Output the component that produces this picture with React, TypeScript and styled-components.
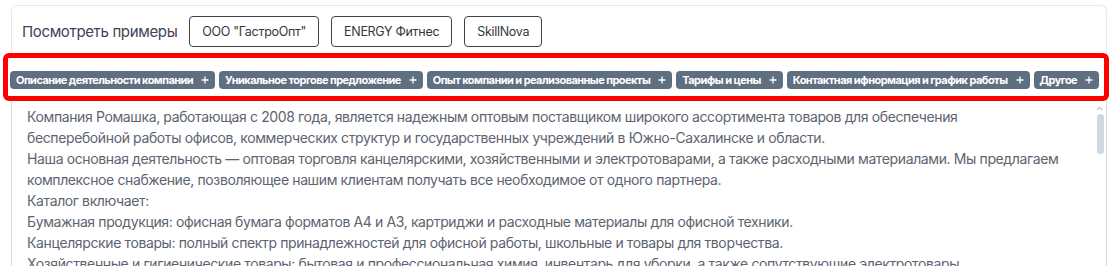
import React from "react";
import styled, { createGlobalStyle } from "styled-components";

const GlobalStyle = createGlobalStyle`
  html, body {
    margin: 0;
    padding: 0;
    background: #ffffff;
    overflow: hidden;
  }
  body {
    font-family: Inter, "Noto Sans", "Liberation Sans", sans-serif;
  }
`;

const Page = styled.div`
  padding: 5px 0 0 8px;
  width: 1105px;
  display: flex;
  flex-direction: column;
`;

const HeaderCard = styled.div`
  margin-left: 3px;
  width: 1096px;
  box-sizing: border-box;
  border: 1px solid #e7e8ea;
  border-bottom: none;
  border-radius: 6px 6px 0 0;
  padding: 10px 10px 11px 10px;
  display: flex;
  align-items: center;
  gap: 12px;
`;

const Label = styled.span`
  font-size: 15px;
  color: #3d4457;
  letter-spacing: -0.35px;
`;

const ExampleButton = styled.button`
  height: 31px;
  box-sizing: border-box;
  padding: 0 12px;
  border: 1px solid #3f4246;
  border-radius: 4px;
  background: #ffffff;
  font-family: Inter, "Noto Sans", "Liberation Sans", sans-serif;
  font-size: 12.5px;
  letter-spacing: -0.3px;
  color: #34373c;
  cursor: pointer;
`;

const TagSection = styled.div`
  width: 1096px;
  height: 38px;
  box-sizing: border-box;
  padding: 13px 0 0 2px;
  display: flex;
  gap: 4px;
  outline: 5px solid #ff0000;
  border-radius: 1px;
  position: relative;
  z-index: 2;
`;

const Tag = styled.span`
  height: 18px;
  box-sizing: border-box;
  padding: 0 6px 0 6px;
  display: inline-flex;
  align-items: center;
  gap: 8px;
  border-radius: 4px;
  background: #5f6f82;
  color: #ffffff;
  font-size: 11px;
  font-weight: 700;
  white-space: nowrap;
  letter-spacing: -0.56px;
`;

const Plus = styled.svg`
  width: 8px;
  height: 8px;
  flex: none;
`;

const EditorFrame = styled.div`
  position: relative;
  margin-left: 3px;
  width: 1096px;
  height: 190px;
`;

const TextArea = styled.textarea`
  display: block;
  width: 100%;
  height: 100%;
  box-sizing: border-box;
  border: 1px solid #d5dce6;
  border-radius: 0 0 6px 6px;
  padding: 9px 20px 9px 15px;
  resize: none;
  white-space: pre;
  font-family: Inter, "Noto Sans", "Liberation Sans", sans-serif;
  font-size: 14px;
  line-height: 21px;
  letter-spacing: -0.38px;
  color: #5d6470;
  outline: none;
  overflow-y: auto;
  overflow-x: hidden;
  scrollbar-width: none;
`;

const ScrollArrow = styled.svg`
  position: absolute;
  top: 10px;
  right: 4px;
  width: 7px;
  height: 5px;
  pointer-events: none;
`;

const ScrollThumb = styled.div`
  position: absolute;
  top: 18px;
  right: 3px;
  width: 7px;
  height: 40px;
  border-radius: 4px;
  background: #cfd7e0;
  pointer-events: none;
`;

const tags = [
  "Описание деятельности компании",
  "Уникальное торгове предложение",
  "Опыт компании и реализованные проекты",
  "Тарифы и цены",
  "Контактная ифнормация и график работы",
  "Другое",
];

const lines = [
  "Компания Ромашка, работающая с 2008 года, является надежным оптовым поставщиком широкого ассортимента товаров для обеспечения",
  "бесперебойной работы офисов, коммерческих структур и государственных учреждений в Южно-Сахалинске и области.",
  "Наша основная деятельность — оптовая торговля канцелярскими, хозяйственными и электротоварами, а также расходными материалами. Мы предлагаем",
  "комплексное снабжение, позволяющее нашим клиентам получать все необходимое от одного партнера.",
  "Каталог включает:",
  "Бумажная продукция: офисная бумага форматов А4 и А3, картриджи и расходные материалы для офисной техники.",
  "Канцелярские товары: полный спектр принадлежностей для офисной работы, школьные и товары для творчества.",
  "Хозяйственные и гигиенические товары: бытовая и профессиональная химия, инвентарь для уборки, а также сопутствующие электротовары.",
  "Электротовары: лампы, удлинители, батарейки, аккумуляторы и прочие товары для бесперебойной работы офиса.",
  "Мы работаем напрямую с ведущими производителями и дистрибьюторами, что позволяет предлагать выгодные цены.",
  "Собственный склад в Южно-Сахалинске обеспечивает постоянное наличие ходовых позиций.",
  "Доставка осуществляется собственным транспортом по городу и области в удобное для клиента время.",
  "Для постоянных клиентов действуют индивидуальные условия сотрудничества и отсрочка платежа.",
  "Свяжитесь с нами, чтобы получить актуальный прайс-лист и коммерческое предложение.",
].join("\n");

export default function App() {
  return (
    <>
      <GlobalStyle />
      <Page>
        <HeaderCard>
          <Label>Посмотреть примеры</Label>
          <ExampleButton>ООО "ГастроОпт"</ExampleButton>
          <ExampleButton>ENERGY Фитнес</ExampleButton>
          <ExampleButton>SkillNova</ExampleButton>
        </HeaderCard>
        <TagSection>
          {tags.map((t) => (
            <Tag key={t}>
              {t}
              <Plus viewBox="0 0 8 8">
                <path d="M4 0.5V7.5M0.5 4H7.5" stroke="#ffffff" strokeWidth="1.3" fill="none" />
              </Plus>
            </Tag>
          ))}
        </TagSection>
        <EditorFrame>
          <TextArea readOnly value={lines} />
          <ScrollArrow viewBox="0 0 7 5">
            <path d="M0.8 4.2L3.5 1.3L6.2 4.2" stroke="#b7bec8" strokeWidth="1.1" fill="none" />
          </ScrollArrow>
          <ScrollThumb />
        </EditorFrame>
      </Page>
    </>
  );
}
